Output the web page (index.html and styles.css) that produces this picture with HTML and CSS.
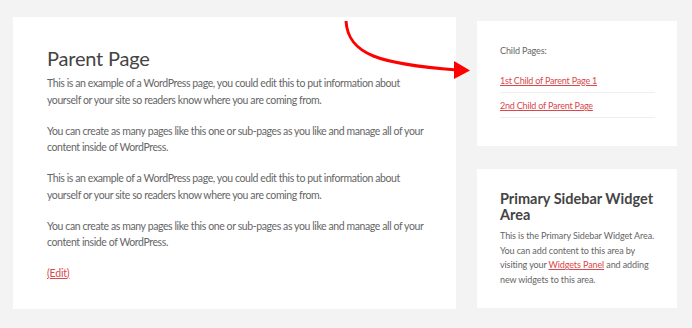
FILE: index.html
```html
<!DOCTYPE html>
<html lang="en">
<head>
    <meta charset="UTF-8">
    <meta name="viewport" content="width=device-width, initial-scale=1.0">
    <title>Parent Page</title>
    <link rel="stylesheet" href="styles.css">
</head>
<body>
    <div class="site">
        <main class="content">
            <h1>Parent Page</h1>
            <p>This is an example of a WordPress page, you could edit this to put information about yourself or your site so readers know where you are coming from.</p>
            <p>You can create as many pages like this one or sub-pages as you like and manage all of your content inside of WordPress.</p>
            <p>This is an example of a WordPress page, you could edit this to put information about yourself or your site so readers know where you are coming from.</p>
            <p>You can create as many pages like this one or sub-pages as you like and manage all of your content inside of WordPress.</p>
            <a class="edit" href="#">(Edit)</a>
        </main>
        <aside class="sidebar">
            <div class="widget child-pages">
                <p class="label">Child Pages:</p>
                <ul>
                    <li><a href="#">1st Child of Parent Page 1</a></li>
                    <li><a href="#">2nd Child of Parent Page</a></li>
                </ul>
            </div>
            <div class="widget">
                <h2>Primary Sidebar Widget Area</h2>
                <p>This is the Primary Sidebar Widget Area. You can add content to this area by visiting your <a href="#">Widgets Panel</a> and adding new widgets to this area.</p>
            </div>
        </aside>
    </div>

    <!-- annotation arrow pointing at the child pages list -->
    <svg class="arrow" width="692" height="328" viewBox="0 0 692 328">
        <path d="M346 21 C348 55, 380 64, 457 70" fill="none" stroke="#f00" stroke-width="3"/>
        <polygon points="454,61 470,70.5 454,79" fill="#f00"/>
    </svg>
</body>
</html>
```

FILE: styles.css
```css
body {
    font-family: Lato, "Open Sans", sans-serif;
    background-color: #f3f3f3;
    color: #666;
    margin: 0;
    padding: 17px 13px;
}
.site {
    display: flex;
    gap: 21px;
    align-items: flex-start;
}
.content {
    background-color: white;
    width: 443px;
    height: 292px;
    box-sizing: border-box;
    padding: 27px 28px 0 34px;
}
h1 {
    font-size: 20px;
    font-weight: 400;
    letter-spacing: -0.2px;
    color: #444;
    margin: 0 0 3px;
    line-height: 28px;
}
.content p {
    font-size: 10.5px;
    letter-spacing: -0.4px;
    line-height: 16.5px;
    margin: 0 0 14.5px;
}
a {
    color: #d9484b;
}
.edit {
    display: block;
    margin-top: 2px;
    font-size: 10.5px;
    letter-spacing: -0.2px;
    line-height: 16.5px;
}
.sidebar {
    width: 200px;
    display: flex;
    flex-direction: column;
    gap: 23px;
    margin-top: 4px;
}
.widget {
    background-color: white;
    padding: 22px 20px 21px 23px;
}
.widget.child-pages {
    height: 125px;
    box-sizing: border-box;
    padding: 22.5px 22px 0 23px;
}
.child-pages .label {
    font-size: 9px;
    line-height: 13px;
    margin: 0 0 17px;
    color: #666;
}
.child-pages ul {
    list-style: none;
    margin: 0;
    padding: 0;
}
.child-pages li {
    font-size: 9px;
    letter-spacing: -0.2px;
    line-height: 13px;
    padding-bottom: 5px;
    margin-bottom: 6.5px;
    border-bottom: 1px solid #eee;
}
.widget h2 {
    font-size: 14.5px;
    font-weight: 700;
    color: #444;
    line-height: 16px;
    margin: 0 0 6px;
}
.widget p {
    font-size: 9px;
    letter-spacing: -0.1px;
    line-height: 14.5px;
    margin: 0;
}
.arrow {
    position: absolute;
    top: 0;
    left: 0;
    pointer-events: none;
}
```
